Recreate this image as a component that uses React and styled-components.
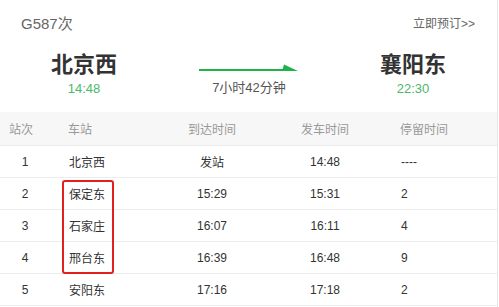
import React from "react";
import styled, { createGlobalStyle } from "styled-components";

const Global = createGlobalStyle`
  html, body { margin: 0; padding: 0; background: #fff; }
  body { font-family: "Liberation Sans", "Noto Sans CJK SC", sans-serif; }
`;

const Page = styled.div`
  width: 497px;
  height: 307px;
  border-right: 1px solid #e6e6e6;
  overflow: hidden;
  background: #fff;
`;

const TopBar = styled.div`
  height: 44px;
  display: flex;
  align-items: center;
  justify-content: space-between;
  padding: 0 22px 0 21px;
`;

const TrainNo = styled.div`
  font-size: 15px;
  color: #666;
`;

const BookLink = styled.a`
  font-size: 12px;
  color: #666;
  text-decoration: none;
`;

const Route = styled.div`
  height: 68px;
  display: grid;
  grid-template-columns: 168px 162px 166px;
`;

const Terminal = styled.div`
  display: flex;
  flex-direction: column;
  align-items: center;
  padding-top: 3px;
`;

const TerminalName = styled.div`
  font-family: "Noto Sans CJK SC", sans-serif;
  font-size: 22px;
  font-weight: 700;
  line-height: 30px;
  color: #333;
`;

const TerminalTime = styled.div`
  margin-top: 3px;
  font-size: 13px;
  line-height: 18px;
  color: #4cb86a;
`;

const Middle = styled.div`
  display: flex;
  flex-direction: column;
  align-items: center;
  padding-top: 19px;
`;

const Duration = styled.div`
  margin-top: 6px;
  font-size: 13px;
  line-height: 18px;
  color: #555;
`;

const Table = styled.div`
  position: relative;
`;

const Row = styled.div`
  display: grid;
  grid-template-columns: 50px 100px 124px 102px 1fr;
  height: ${(p) => (p.$head ? "34px" : "32px")};
  box-sizing: border-box;
  align-items: center;
  border-bottom: 1px solid #ececec;
  background: ${(p) => (p.$head ? "#f7f7f7" : "#fff")};
  color: ${(p) => (p.$head ? "#999" : "#333")};
  font-size: 12px;
`;

const Cell = styled.div`
  text-align: ${(p) => p.$align || "left"};
  padding-left: ${(p) => p.$pad || 0}px;
  white-space: nowrap;
`;

const Highlight = styled.div`
  position: absolute;
  left: 62px;
  top: 68px;
  width: 52px;
  height: 94px;
  box-sizing: border-box;
  border: 2px solid #e3201d;
  border-radius: 3px;
  pointer-events: none;
`;

const Arrow = () => (
  <svg width="100" height="10" viewBox="0 0 100 10">
    <line x1="0" y1="7" x2="90" y2="7" stroke="#1fb14a" strokeWidth="2" />
    <polygon points="83,8 85,1.5 99,8" fill="#1fb14a" />
  </svg>
);

const stops = [
  ["1", "北京西", "发站", "14:48", "----"],
  ["2", "保定东", "15:29", "15:31", "2"],
  ["3", "石家庄", "16:07", "16:11", "4"],
  ["4", "邢台东", "16:39", "16:48", "9"],
  ["5", "安阳东", "17:16", "17:18", "2"],
];

export default function App() {
  return (
    <Page>
      <Global />
      <TopBar>
        <TrainNo>G587次</TrainNo>
        <BookLink href="#">立即预订&gt;&gt;</BookLink>
      </TopBar>
      <Route>
        <Terminal>
          <TerminalName>北京西</TerminalName>
          <TerminalTime>14:48</TerminalTime>
        </Terminal>
        <Middle>
          <Arrow />
          <Duration>7小时42分钟</Duration>
        </Middle>
        <Terminal>
          <TerminalName>襄阳东</TerminalName>
          <TerminalTime>22:30</TerminalTime>
        </Terminal>
      </Route>
      <Table>
        <Row $head>
          <Cell $pad={9}>站次</Cell>
          <Cell $pad={18}>车站</Cell>
          <Cell $align="center">到达时间</Cell>
          <Cell $align="center">发车时间</Cell>
          <Cell $pad={24}>停留时间</Cell>
        </Row>
        {stops.map((s) => (
          <Row key={s[0]}>
            <Cell $align="center">{s[0]}</Cell>
            <Cell $pad={19}>{s[1]}</Cell>
            <Cell $align="center">{s[2]}</Cell>
            <Cell $align="center">{s[3]}</Cell>
            <Cell $pad={25}>{s[4]}</Cell>
          </Row>
        ))}
        <Highlight />
      </Table>
    </Page>
  );
}
